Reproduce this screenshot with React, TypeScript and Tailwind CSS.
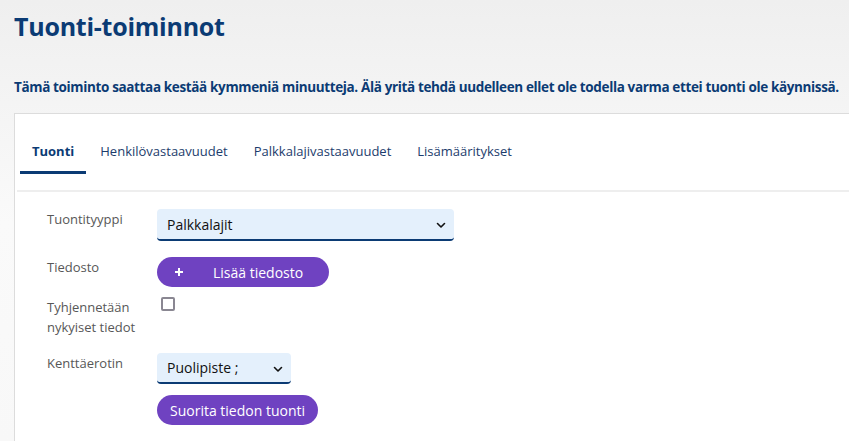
import { useState } from 'react'

const tabs = ['Tuonti', 'Henkilövastaavuudet', 'Palkkalajivastaavuudet', 'Lisämääritykset']

function Chevron() {
  return (
    <svg
      width="10"
      height="10"
      viewBox="0 0 10 10"
      className="pointer-events-none absolute right-[8px] top-1/2 -translate-y-1/2"
    >
      <path d="M1.5 3.5 5 7l3.5-3.5" fill="none" stroke="#111" strokeWidth="1.6" strokeLinecap="round" strokeLinejoin="round" />
    </svg>
  )
}

function SelectBox({ value, options, className }: { value: string; options: string[]; className: string }) {
  return (
    <div className={`relative ${className}`}>
      <select
        defaultValue={value}
        className="h-full w-full appearance-none rounded-[4px] border-b-2 border-[#0b3b74] bg-[#e4f0fc] pl-[10px] text-[14px] text-[#111] outline-none"
      >
        {options.map((o) => (
          <option key={o}>{o}</option>
        ))}
      </select>
      <Chevron />
    </div>
  )
}

export default function App() {
  const [active, setActive] = useState(0)
  return (
    <div
      className="min-h-screen bg-gradient-to-b from-[#efefef] via-[#fafafa] to-[#f8f8f8] text-[#0b3b74]"
      style={{ fontFamily: '"Open Sans", "Liberation Sans", sans-serif' }}
    >
      <div className="px-[14px] pt-[10px]">
        <h1 className="text-[25px] font-bold leading-[32px] tracking-[-0.25px]">Tuonti-toiminnot</h1>
        <p className="mt-[36px] whitespace-nowrap text-[13.5px] font-bold leading-[18px] tracking-[-0.36px]">
          Tämä toiminto saattaa kestää kymmeniä minuutteja. Älä yritä tehdä uudelleen ellet ole todella varma ettei
          tuonti ole käynnissä.
        </p>
      </div>

      <div className="ml-[14px] mt-[17px] border-l border-t border-[#dcdcdc] bg-white pb-[20px]">
        <div className="ml-[2px] border-b-2 border-[#eeeeee] pl-[3px] pt-[28px]">
          <div className="mb-[16px] flex gap-[2px]">
            {tabs.map((t, i) => (
              <button
                key={t}
                onClick={() => setActive(i)}
                className={`border-b-[3px] px-[12px] pb-[11px] text-[13px] leading-[18px] ${
                  i === active ? 'border-[#0b3b74] font-bold text-[#0b3b74]' : 'border-transparent text-[#1c3c6c]'
                }`}
              >
                {t}
              </button>
            ))}
          </div>
        </div>

        <div className="grid grid-cols-[110px_1fr] pl-[32px] pt-[17px] text-[13px] text-[#575757]">
          <div className="pt-[1px] leading-[18px]">Tuontityyppi</div>
          <SelectBox value="Palkkalajit" options={['Palkkalajit', 'Henkilöt']} className="h-[32px] w-[297px]" />

          <div className="mt-[16px] pt-[1px] leading-[18px]">Tiedosto</div>
          <div className="mt-[16px]">
            <button className="flex h-[30px] w-[172px] items-center rounded-full bg-[#6f42c1] pl-[17px] text-[14px] text-white">
              <svg width="10" height="10" viewBox="0 0 10 10">
                <path d="M5 1v8M1 5h8" stroke="#fff" strokeWidth="2" />
              </svg>
              <span className="ml-[29px]">Lisää tiedosto</span>
            </button>
          </div>

          <div className="mt-[10px] leading-[20px]">
            Tyhjennetään
            <br />
            nykyiset tiedot
          </div>
          <div className="mt-[10px] pl-[4px]">
            <input
              type="checkbox"
              className="h-[14px] w-[14px] appearance-none rounded-[2px] border-2 border-[#8a8792] bg-white"
            />
          </div>

          <div className="mt-[16px] pt-[1px] leading-[18px]">Kenttäerotin</div>
          <SelectBox value="Puolipiste ;" options={['Puolipiste ;', 'Pilkku ,']} className="mt-[16px] h-[31px] w-[134px]" />

          <div />
          <div className="mt-[11px]">
            <button className="h-[30px] rounded-full bg-[#6f42c1] px-[13px] text-[14px] text-white">
              Suorita tiedon tuonti
            </button>
          </div>
        </div>
      </div>
    </div>
  )
}
